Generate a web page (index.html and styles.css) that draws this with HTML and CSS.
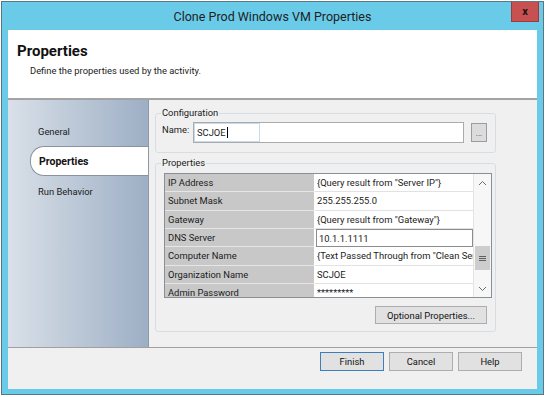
FILE: index.html
```html
<!DOCTYPE html>
<html lang="en">
<head>
<meta charset="utf-8">
<title>Clone Prod Windows VM Properties</title>
<link rel="stylesheet" href="styles.css">
</head>
<body>
<div class="window">
  <div class="titlebar">
    <span class="title">Clone Prod Windows VM Properties</span>
    <button class="close" type="button">x</button>
  </div>
  <div class="client">
    <header class="header">
      <h1>Properties</h1>
      <p>Define the properties used by the activity.</p>
    </header>
    <div class="main">
      <nav class="sidebar">
        <div class="nav-item">General</div>
        <div class="nav-item active">Properties</div>
        <div class="nav-item">Run Behavior</div>
      </nav>
      <section class="content">
        <fieldset class="group config">
          <legend>Configuration</legend>
          <div class="name-row">
            <label class="name-label">Name:</label>
            <div class="input"><span class="sel">SCJOE<span class="caret"></span></span></div>
            <button class="browse" type="button">...</button>
          </div>
        </fieldset>
        <fieldset class="group props">
          <legend>Properties</legend>
          <div class="grid-wrap">
            <div class="rows">
              <div class="row"><div class="name">IP Address</div><div class="val">{Query result from "Server IP"}</div></div>
              <div class="row"><div class="name">Subnet Mask</div><div class="val">255.255.255.0</div></div>
              <div class="row"><div class="name">Gateway</div><div class="val">{Query result from "Gateway"}</div></div>
              <div class="row"><div class="name">DNS Server</div><div class="val edit">10.1.1.1111</div></div>
              <div class="row"><div class="name">Computer Name</div><div class="val">{Text Passed Through from "Clean Server Name"}</div></div>
              <div class="row"><div class="name">Organization Name</div><div class="val">SCJOE</div></div>
              <div class="row"><div class="name">Admin Password</div><div class="val">*********</div></div>
              <div class="row"><div class="name">Product Key</div><div class="val"></div></div>
            </div>
            <div class="scrollbar">
              <div class="arrow"><svg width="9" height="6" viewBox="0 0 9 6"><polyline points="1,5 4.5,1.5 8,5" fill="none" stroke="#6b6b6b" stroke-width="1"/></svg></div>
              <div class="track track-top"></div>
              <div class="thumb"><svg width="7" height="5" viewBox="0 0 7 5"><path d="M0 0.5H7M0 2.5H7M0 4.5H7" stroke="#5e5e5e" stroke-width="1"/></svg></div>
              <div class="track track-bottom"></div>
              <div class="arrow"><svg width="9" height="6" viewBox="0 0 9 6"><polyline points="1,1 4.5,4.5 8,1" fill="none" stroke="#6b6b6b" stroke-width="1"/></svg></div>
            </div>
          </div>
          <div class="opt-row"><button class="btn opt" type="button">Optional Properties...</button></div>
        </fieldset>
      </section>
    </div>
    <footer class="footer">
      <button class="btn default" type="button">Finish</button>
      <button class="btn" type="button">Cancel</button>
      <button class="btn" type="button">Help</button>
    </footer>
  </div>
</div>
</body>
</html>
```
FILE: styles.css
```css
* { box-sizing: border-box; }

body {
  margin: 0;
  background: #ffffff;
  font-family: Roboto, "Liberation Sans", sans-serif;
  font-size: 9.4px;
  color: #1b1b1b;
}

.window {
  margin: 1px 0 0 1px;
  width: 543px;
  height: 394px;
  border: 1px solid #5d7684;
  background: #6acbe9;
  padding: 0 6px 5px 6px;
  display: flex;
  flex-direction: column;
}

.titlebar {
  height: 28px;
  margin: 0 -6px;
  position: relative;
  display: flex;
  align-items: center;
  justify-content: center;
}

.title {
  font-size: 12.5px;
  color: #1e1e1e;
}

.close {
  position: absolute;
  top: 0;
  right: 4px;
  width: 28px;
  height: 20px;
  padding: 0;
  background: #c75050;
  border: 1px solid #a03a3a;
  border-top: none;
  color: #151515;
  font: bold 11px Roboto, sans-serif;
  display: flex;
  align-items: center;
  justify-content: center;
}

.client {
  flex: 1;
  background: #ffffff;
  display: flex;
  flex-direction: column;
}

.header {
  height: 70px;
  flex: none;
  border-bottom: 2px solid #a3a3a3;
  padding: 12px 0 0 9px;
}

.header h1 {
  margin: 0;
  font-size: 15px;
  line-height: 18px;
  font-weight: bold;
  color: #111;
}

.header p {
  margin: 5px 0 0 13px;
  line-height: 12px;
}

.main {
  height: 248px;
  flex: none;
  display: flex;
  border-bottom: 1px solid #a0a0a0;
}

.sidebar {
  width: 141px;
  flex: none;
  border-right: 1px solid #8e99a5;
  background: linear-gradient(to right, #d9e0e8, #9dafc5);
  padding-top: 16px;
}

.nav-item {
  height: 30px;
  padding-left: 30px;
  display: flex;
  align-items: center;
  white-space: nowrap;
}

.nav-item.active {
  margin-left: 22px;
  padding-left: 8px;
  background: #ffffff;
  border: 1px solid #8a939d;
  border-right: none;
  border-radius: 14px 0 0 14px;
  font-weight: bold;
  font-size: 10.5px;
  color: #111;
}

.content {
  flex: 1;
  background: #f0f0f0;
  padding: 7px 41px 0 6px;
}

.group {
  margin: 0;
  border: 1px solid #d6dee4;
  border-radius: 3px;
  min-width: 0;
}

.group legend {
  padding: 0 1px;
  margin-left: -1px;
  line-height: 12px;
}

.config {
  padding: 3px 8px 9px 6px;
}

.name-row {
  display: flex;
  align-items: flex-start;
}

.name-label {
  width: 31px;
  margin-top: 2px;
  line-height: 12px;
}

.input {
  width: 271px;
  height: 21px;
  background: #ffffff;
  border: 1px solid #ababab;
}

.sel {
  display: flex;
  align-items: center;
  width: 66px;
  height: 19px;
  border: 1px solid #c6dcee;
  padding-left: 2px;
}

.caret {
  width: 1px;
  height: 11px;
  background: #000;
  margin-left: 1px;
}

.browse {
  margin: 1px 0 0 7px;
  width: 16px;
  height: 19px;
  padding: 0 0 3px 0;
  background: #dcdcdc;
  border: 1px solid #9c9c9c;
  color: #23407a;
  font: 8px Roboto, sans-serif;
  display: flex;
  align-items: flex-end;
  justify-content: center;
}

.props {
  margin-top: 4px;
  padding: 4px 3px 7px 8px;
}

.props legend {
  margin-left: -3px;
}

.grid-wrap {
  display: flex;
  height: 125px;
  border: 1px solid #8a8f96;
  background: #ffffff;
}

.rows {
  width: 308px;
  overflow: hidden;
}

.row {
  display: grid;
  grid-template-columns: 150px 1fr;
  height: 18.33px;
}

.name {
  background: #c8c8c8;
  border-bottom: 1px solid #e6e6e6;
  border-right: 1px solid #ffffff;
  padding-left: 3px;
  white-space: nowrap;
  display: flex;
  align-items: center;
}

.val {
  border-bottom: 1px solid #e2e2e2;
  padding-left: 2px;
  white-space: nowrap;
  overflow: hidden;
  display: flex;
  align-items: center;
}

.val.edit {
  border: 1px solid #8c8c8c;
  margin-left: 1px;
  padding-left: 2px;
}

.scrollbar {
  width: 18px;
  flex: none;
  border-left: 1px solid #e4e4e4;
  background: #f7f7f7;
  display: flex;
  flex-direction: column;
  padding: 0 1px;
}

.arrow {
  height: 17px;
  flex: none;
  display: flex;
  align-items: center;
  justify-content: center;
}

.track-top { height: 55px; flex: none; }
.track-bottom { flex: 1; }

.thumb {
  height: 24px;
  flex: none;
  background: #cdcdcd;
  display: flex;
  align-items: center;
  justify-content: center;
}

.opt-row {
  display: flex;
  justify-content: flex-end;
  margin-top: 8px;
  padding-right: 5px;
}

.btn {
  height: 19px;
  padding: 0;
  background: #e1e1e1;
  border: 1px solid #adadad;
  font: 9.4px Roboto, "Liberation Sans", sans-serif;
  color: #111;
}

.btn.opt {
  width: 112px;
  height: 18px;
}

.footer {
  flex: 1;
  display: flex;
  justify-content: flex-end;
  align-items: flex-start;
  gap: 5px;
  padding: 4px 15px 0 0;
  background: #f0f0f0;
}

.footer .btn {
  width: 64px;
}

.btn.default {
  border-color: #3d7fba;
}
```
